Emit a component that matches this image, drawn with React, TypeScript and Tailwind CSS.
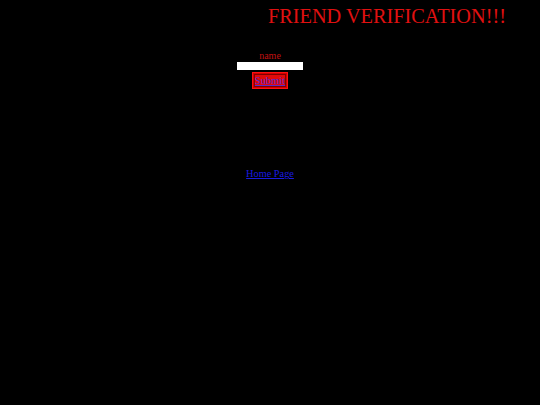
export default function App() {
  return (
    <div className="w-[540px] h-[405px] bg-black overflow-hidden" style={{ fontFamily: '"Liberation Serif", "Times New Roman", serif' }}>
      {/* Title */}
      <div className="pl-[268px] pt-[6px]">
        <h1 className="text-[20.3px] leading-none text-[#e01010] whitespace-nowrap">FRIEND VERIFICATION!!!</h1>
      </div>

      {/* Form */}
      <div className="flex flex-col items-center mt-[25px]">
        <label className="text-[10px] leading-none text-[#c01010]">name</label>
        <input type="text" className="mt-[1px] w-[66px] h-[8px] bg-white border-0 outline-none" />
        <button className="mt-[2px] border-[1.5px] border-[#ff1010] bg-[#d00000] p-[1px]">
          <span className="block px-0 h-[13px] border border-[#800000] bg-[#e00a0a] text-[10.5px] leading-[12px] text-[#5a28c8] underline">
            Submit
          </span>
        </button>
      </div>

      {/* Link */}
      <div className="flex justify-center mt-[80px]">
        <a href="#" className="text-[10.3px] leading-none text-[#1a1ae0] underline">Home Page</a>
      </div>
    </div>
  );
}
